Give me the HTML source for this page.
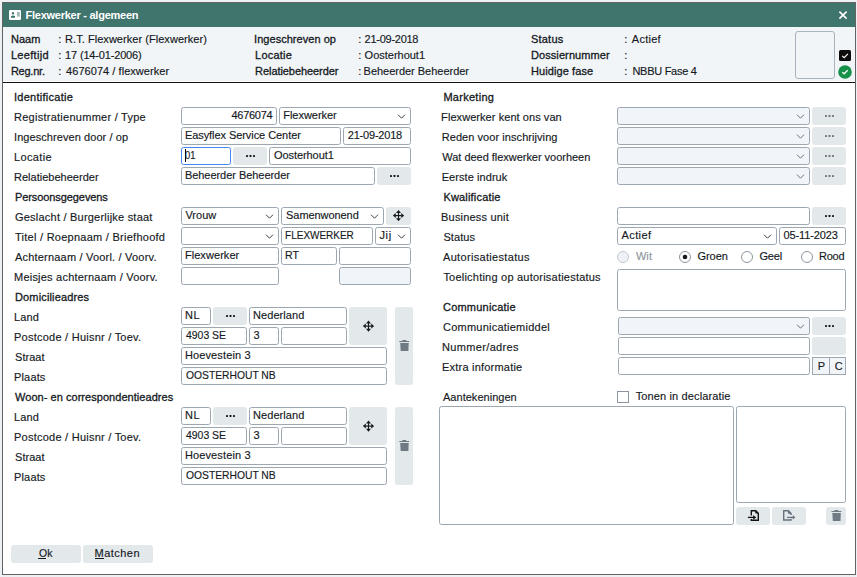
<!DOCTYPE html><html><head><meta charset="utf-8"><style>
html,body{margin:0;padding:0;}
body{width:857px;height:577px;overflow:hidden;background:#eef1f3;position:relative;font-family:"Liberation Sans",sans-serif;font-size:11px;color:#15191d;}
div,span,svg{position:absolute;box-sizing:border-box;}
.t{white-space:nowrap;line-height:14px;}
.inp{border:1px solid #9ca7b2;border-radius:2.5px;}
.btn{background:#e3e8eb;border-radius:3px;}
</style></head><body>

<div class="" style="left:2px;top:2px;width:854px;height:573px;background:#fff;border:1px solid #626262;"></div>
<div class="" style="left:3px;top:3px;width:852px;height:24px;background:#40756e;"></div>
<div class="" style="left:3px;top:27px;width:852px;height:54px;background:#f1f5f8;"></div>
<div class="" style="left:3px;top:82px;width:852px;height:1px;background:#111;"></div>
<svg style="left:9px;top:10px" width="12" height="10" viewBox="0 0 12 10"><rect x="0" y="0" width="12" height="10" rx="1.2" fill="#fff"/><ellipse cx="3.95" cy="3.25" rx="1.1" ry="1.2" fill="#40756e"/><rect x="3.4" y="4.3" width="1.2" height="1.7" fill="#9dbab5"/><rect x="2" y="5.9" width="4" height="1.85" fill="#40756e"/><rect x="8" y="2" width="2.8" height="4.6" fill="#9fbab5"/></svg>
<svg style="left:838px;top:10px" width="11" height="11" viewBox="0 0 11 11"><path d="M1.4 1.6 L8.6 8.6 M8.6 1.6 L1.4 8.6" stroke="#fff" stroke-width="1.6"/></svg>
<div class="" style="left:795px;top:31px;width:40px;height:48px;border:1px solid #a9b3bd;border-radius:3px;background:#f1f5f8;"></div>
<svg style="left:839px;top:50px" width="12" height="11" viewBox="0 0 12 11"><rect x="0" y="0" width="12" height="11" rx="1.5" fill="#0c0c0c"/><path d="M3.2 5.8 L5.2 7.7 L8.9 3.9" fill="none" stroke="#fff" stroke-width="1.15"/></svg>
<svg style="left:838px;top:65px" width="14" height="14" viewBox="0 0 14 14"><circle cx="7" cy="7" r="6.8" fill="#17914a"/><path d="M4.3 7.1 L6.1 8.8 L9.7 5.3" fill="none" stroke="#fff" stroke-width="1.25"/></svg>
<div class="inp" style="left:181px;top:107px;width:96px;height:18px;background:#fff;"></div>
<div class="inp" style="left:279px;top:107px;width:132px;height:18px;background:#fff;"><svg style="left:117px;top:5px" width="10" height="7" viewBox="0 0 10 7"><path d="M1 1.7 L4.5 5.2 L8 1.7" fill="none" stroke="#3a3f44" stroke-width="1"/></svg></div>
<div class="inp" style="left:181px;top:127px;width:160px;height:18px;background:#fff;"></div>
<div class="inp" style="left:343px;top:127px;width:68px;height:18px;background:#fff;"></div>
<div class="inp" style="left:181px;top:147px;width:50px;height:18px;background:#fff;border-color:#4189ee;"></div>
<div class="" style="left:185px;top:149px;width:1px;height:13px;background:#000;"></div>
<div class="btn" style="left:233px;top:147px;width:34px;height:18px;"><svg style="left:13px;top:8px" width="10" height="2" viewBox="0 0 10 2"><rect x="0" y="0" width="2" height="2" rx="0.4" fill="#15191d"/><rect x="3.5" y="0" width="2" height="2" rx="0.4" fill="#15191d"/><rect x="7" y="0" width="2" height="2" rx="0.4" fill="#15191d"/></svg></div>
<div class="inp" style="left:269px;top:147px;width:142px;height:18px;background:#fff;"></div>
<div class="inp" style="left:181px;top:167px;width:194px;height:18px;background:#fff;"></div>
<div class="btn" style="left:377px;top:167px;width:34px;height:18px;"><svg style="left:13px;top:8px" width="10" height="2" viewBox="0 0 10 2"><rect x="0" y="0" width="2" height="2" rx="0.4" fill="#15191d"/><rect x="3.5" y="0" width="2" height="2" rx="0.4" fill="#15191d"/><rect x="7" y="0" width="2" height="2" rx="0.4" fill="#15191d"/></svg></div>
<div class="inp" style="left:181px;top:207px;width:98px;height:18px;background:#fff;"><svg style="left:83px;top:5px" width="10" height="7" viewBox="0 0 10 7"><path d="M1 1.7 L4.5 5.2 L8 1.7" fill="none" stroke="#3a3f44" stroke-width="1"/></svg></div>
<div class="inp" style="left:281px;top:207px;width:103px;height:18px;background:#fff;"><svg style="left:88px;top:5px" width="10" height="7" viewBox="0 0 10 7"><path d="M1 1.7 L4.5 5.2 L8 1.7" fill="none" stroke="#3a3f44" stroke-width="1"/></svg></div>
<div class="btn" style="left:386px;top:207px;width:25px;height:18px;"><svg style="left:6px;top:2px" width="12" height="12" viewBox="-6.50 -6.60 12 12"><path d="M0 -5.6 L2.5 -2.7 L-2.5 -2.7 Z M0 5.6 L2.5 2.7 L-2.5 2.7 Z M-5.6 0 L-2.7 -2.5 L-2.7 2.5 Z M5.6 0 L2.7 -2.5 L2.7 2.5 Z" fill="#15191d"/><rect x="-0.55" y="-3" width="1.1" height="6" fill="#15191d"/><rect x="-3" y="-0.6" width="6" height="1.2" fill="#15191d"/></svg></div>
<div class="inp" style="left:181px;top:227px;width:98px;height:18px;background:#fff;"><svg style="left:83px;top:5px" width="10" height="7" viewBox="0 0 10 7"><path d="M1 1.7 L4.5 5.2 L8 1.7" fill="none" stroke="#3a3f44" stroke-width="1"/></svg></div>
<div class="inp" style="left:281px;top:227px;width:92px;height:18px;background:#fff;"></div>
<div class="inp" style="left:375px;top:227px;width:36px;height:18px;background:#fff;"><svg style="left:21px;top:5px" width="10" height="7" viewBox="0 0 10 7"><path d="M1 1.7 L4.5 5.2 L8 1.7" fill="none" stroke="#3a3f44" stroke-width="1"/></svg></div>
<div class="inp" style="left:181px;top:247px;width:98px;height:18px;background:#fff;"></div>
<div class="inp" style="left:281px;top:247px;width:56px;height:18px;background:#fff;"></div>
<div class="inp" style="left:339px;top:247px;width:72px;height:18px;background:#fff;"></div>
<div class="inp" style="left:181px;top:267px;width:98px;height:18px;background:#fff;"></div>
<div class="inp" style="left:339px;top:267px;width:72px;height:18px;background:#f1f4f8;"></div>
<div class="inp" style="left:181px;top:307px;width:30px;height:18px;background:#fff;"></div>
<div class="btn" style="left:213px;top:307px;width:34px;height:18px;"><svg style="left:13px;top:8px" width="10" height="2" viewBox="0 0 10 2"><rect x="0" y="0" width="2" height="2" rx="0.4" fill="#15191d"/><rect x="3.5" y="0" width="2" height="2" rx="0.4" fill="#15191d"/><rect x="7" y="0" width="2" height="2" rx="0.4" fill="#15191d"/></svg></div>
<div class="inp" style="left:249px;top:307px;width:98px;height:18px;background:#fff;"></div>
<div class="btn" style="left:349px;top:307px;width:38px;height:38px;"><svg style="left:13px;top:13px" width="12" height="12" viewBox="-6.50 -6.10 12 12"><path d="M0 -5.6 L2.5 -2.7 L-2.5 -2.7 Z M0 5.6 L2.5 2.7 L-2.5 2.7 Z M-5.6 0 L-2.7 -2.5 L-2.7 2.5 Z M5.6 0 L2.7 -2.5 L2.7 2.5 Z" fill="#15191d"/><rect x="-0.55" y="-3" width="1.1" height="6" fill="#15191d"/><rect x="-3" y="-0.6" width="6" height="1.2" fill="#15191d"/></svg></div>
<div class="inp" style="left:181px;top:327px;width:66px;height:18px;background:#fff;"></div>
<div class="inp" style="left:249px;top:327px;width:30px;height:18px;background:#fff;"></div>
<div class="inp" style="left:281px;top:327px;width:66px;height:18px;background:#fff;"></div>
<div class="inp" style="left:181px;top:347px;width:206px;height:18px;background:#fff;"></div>
<div class="inp" style="left:181px;top:367px;width:206px;height:18px;background:#fff;"></div>
<div class="btn" style="left:395px;top:307px;width:18px;height:78px;"><svg style="left:4px;top:33px" width="12" height="12" viewBox="-0.10 0.00 12 12"><rect x="3.3" y="0" width="3.8" height="1" fill="#6f7a85"/><rect x="0.2" y="1" width="9.9" height="1.05" fill="#6f7a85"/><path d="M1.1 2.9 H9.6 L9.3 11 H1.6 Z" fill="#6f7a85"/></svg></div>
<div class="inp" style="left:181px;top:407px;width:30px;height:18px;background:#fff;"></div>
<div class="btn" style="left:213px;top:407px;width:34px;height:18px;"><svg style="left:13px;top:8px" width="10" height="2" viewBox="0 0 10 2"><rect x="0" y="0" width="2" height="2" rx="0.4" fill="#15191d"/><rect x="3.5" y="0" width="2" height="2" rx="0.4" fill="#15191d"/><rect x="7" y="0" width="2" height="2" rx="0.4" fill="#15191d"/></svg></div>
<div class="inp" style="left:249px;top:407px;width:98px;height:18px;background:#fff;"></div>
<div class="btn" style="left:349px;top:407px;width:38px;height:38px;"><svg style="left:13px;top:13px" width="12" height="12" viewBox="-6.50 -6.10 12 12"><path d="M0 -5.6 L2.5 -2.7 L-2.5 -2.7 Z M0 5.6 L2.5 2.7 L-2.5 2.7 Z M-5.6 0 L-2.7 -2.5 L-2.7 2.5 Z M5.6 0 L2.7 -2.5 L2.7 2.5 Z" fill="#15191d"/><rect x="-0.55" y="-3" width="1.1" height="6" fill="#15191d"/><rect x="-3" y="-0.6" width="6" height="1.2" fill="#15191d"/></svg></div>
<div class="inp" style="left:181px;top:427px;width:66px;height:18px;background:#fff;"></div>
<div class="inp" style="left:249px;top:427px;width:30px;height:18px;background:#fff;"></div>
<div class="inp" style="left:281px;top:427px;width:66px;height:18px;background:#fff;"></div>
<div class="inp" style="left:181px;top:447px;width:206px;height:18px;background:#fff;"></div>
<div class="inp" style="left:181px;top:467px;width:206px;height:18px;background:#fff;"></div>
<div class="btn" style="left:395px;top:407px;width:18px;height:78px;"><svg style="left:4px;top:33px" width="12" height="12" viewBox="-0.10 0.00 12 12"><rect x="3.3" y="0" width="3.8" height="1" fill="#6f7a85"/><rect x="0.2" y="1" width="9.9" height="1.05" fill="#6f7a85"/><path d="M1.1 2.9 H9.6 L9.3 11 H1.6 Z" fill="#6f7a85"/></svg></div>
<div class="inp" style="left:617px;top:107px;width:193px;height:18px;background:#f1f4f8;"><svg style="left:178px;top:5px" width="10" height="7" viewBox="0 0 10 7"><path d="M1 1.7 L4.5 5.2 L8 1.7" fill="none" stroke="#6b737b" stroke-width="1"/></svg></div>
<div class="btn" style="left:812px;top:107px;width:34px;height:18px;"><svg style="left:13px;top:8px" width="10" height="2" viewBox="0 0 10 2"><rect x="0" y="0" width="2" height="2" rx="0.4" fill="#6b737b"/><rect x="3.5" y="0" width="2" height="2" rx="0.4" fill="#6b737b"/><rect x="7" y="0" width="2" height="2" rx="0.4" fill="#6b737b"/></svg></div>
<div class="inp" style="left:617px;top:127px;width:193px;height:18px;background:#f1f4f8;"><svg style="left:178px;top:5px" width="10" height="7" viewBox="0 0 10 7"><path d="M1 1.7 L4.5 5.2 L8 1.7" fill="none" stroke="#6b737b" stroke-width="1"/></svg></div>
<div class="btn" style="left:812px;top:127px;width:34px;height:18px;"><svg style="left:13px;top:8px" width="10" height="2" viewBox="0 0 10 2"><rect x="0" y="0" width="2" height="2" rx="0.4" fill="#6b737b"/><rect x="3.5" y="0" width="2" height="2" rx="0.4" fill="#6b737b"/><rect x="7" y="0" width="2" height="2" rx="0.4" fill="#6b737b"/></svg></div>
<div class="inp" style="left:617px;top:147px;width:193px;height:18px;background:#f1f4f8;"><svg style="left:178px;top:5px" width="10" height="7" viewBox="0 0 10 7"><path d="M1 1.7 L4.5 5.2 L8 1.7" fill="none" stroke="#6b737b" stroke-width="1"/></svg></div>
<div class="btn" style="left:812px;top:147px;width:34px;height:18px;"><svg style="left:13px;top:8px" width="10" height="2" viewBox="0 0 10 2"><rect x="0" y="0" width="2" height="2" rx="0.4" fill="#6b737b"/><rect x="3.5" y="0" width="2" height="2" rx="0.4" fill="#6b737b"/><rect x="7" y="0" width="2" height="2" rx="0.4" fill="#6b737b"/></svg></div>
<div class="inp" style="left:617px;top:167px;width:193px;height:18px;background:#f1f4f8;"><svg style="left:178px;top:5px" width="10" height="7" viewBox="0 0 10 7"><path d="M1 1.7 L4.5 5.2 L8 1.7" fill="none" stroke="#6b737b" stroke-width="1"/></svg></div>
<div class="btn" style="left:812px;top:167px;width:34px;height:18px;"><svg style="left:13px;top:8px" width="10" height="2" viewBox="0 0 10 2"><rect x="0" y="0" width="2" height="2" rx="0.4" fill="#6b737b"/><rect x="3.5" y="0" width="2" height="2" rx="0.4" fill="#6b737b"/><rect x="7" y="0" width="2" height="2" rx="0.4" fill="#6b737b"/></svg></div>
<div class="inp" style="left:617px;top:207px;width:193px;height:18px;background:#fff;"></div>
<div class="btn" style="left:812px;top:207px;width:34px;height:18px;"><svg style="left:13px;top:8px" width="10" height="2" viewBox="0 0 10 2"><rect x="0" y="0" width="2" height="2" rx="0.4" fill="#15191d"/><rect x="3.5" y="0" width="2" height="2" rx="0.4" fill="#15191d"/><rect x="7" y="0" width="2" height="2" rx="0.4" fill="#15191d"/></svg></div>
<div class="inp" style="left:617px;top:227px;width:160px;height:18px;background:#fff;"><svg style="left:145px;top:5px" width="10" height="7" viewBox="0 0 10 7"><path d="M1 1.7 L4.5 5.2 L8 1.7" fill="none" stroke="#3a3f44" stroke-width="1"/></svg></div>
<div class="inp" style="left:779px;top:227px;width:67px;height:18px;background:#fff;"></div>
<svg style="left:617px;top:251px" width="12" height="12" viewBox="0 0 12 12"><circle cx="6" cy="6" r="5.5" fill="#eef2f6" stroke="#c2c8ce" stroke-width="1"/></svg>
<svg style="left:679px;top:251px" width="12" height="12" viewBox="0 0 12 12"><circle cx="6" cy="6" r="5.5" fill="#fff" stroke="#8c959e" stroke-width="1"/><circle cx="6" cy="6" r="2.3" fill="#15191d"/></svg>
<svg style="left:741px;top:251px" width="12" height="12" viewBox="0 0 12 12"><circle cx="6" cy="6" r="5.5" fill="#fff" stroke="#8c959e" stroke-width="1"/></svg>
<svg style="left:801px;top:251px" width="12" height="12" viewBox="0 0 12 12"><circle cx="6" cy="6" r="5.5" fill="#fff" stroke="#8c959e" stroke-width="1"/></svg>
<div class="inp" style="left:617px;top:269px;width:229px;height:42px;background:#fff;"></div>
<div class="inp" style="left:618px;top:317px;width:192px;height:18px;background:#f1f4f8;"><svg style="left:177px;top:5px" width="10" height="7" viewBox="0 0 10 7"><path d="M1 1.7 L4.5 5.2 L8 1.7" fill="none" stroke="#6b737b" stroke-width="1"/></svg></div>
<div class="btn" style="left:812px;top:317px;width:34px;height:18px;"><svg style="left:13px;top:8px" width="10" height="2" viewBox="0 0 10 2"><rect x="0" y="0" width="2" height="2" rx="0.4" fill="#15191d"/><rect x="3.5" y="0" width="2" height="2" rx="0.4" fill="#15191d"/><rect x="7" y="0" width="2" height="2" rx="0.4" fill="#15191d"/></svg></div>
<div class="inp" style="left:618px;top:337px;width:192px;height:18px;background:#fff;"></div>
<div class="btn" style="left:812px;top:337px;width:34px;height:18px;"></div>
<div class="inp" style="left:618px;top:357px;width:192px;height:18px;background:#fff;"></div>
<div style="left:812px;top:357px;width:18px;height:18px;border:1px solid #9ca7b2;background:#f1f5f8;"></div>
<div style="left:829px;top:357px;width:17px;height:18px;border:1px solid #9ca7b2;background:#f1f5f8;"></div>
<div style="left:617px;top:391px;width:12px;height:12px;border:1px solid #8c959e;background:#fff;"></div>
<div class="inp" style="left:439px;top:406px;width:295px;height:119px;background:#fff;"></div>
<div class="inp" style="left:736px;top:406px;width:110px;height:97px;background:#fff;"></div>
<div class="btn" style="left:736px;top:507px;width:34px;height:18px;"><svg style="left:0;top:0" width="34" height="18" viewBox="0 0 34 18"><path d="M15.3 8.4 V3.7 H19.8 L22.3 6.2 V13.2 H15.3 V12.1" fill="none" stroke="#111" stroke-width="1.4"/><path d="M19.4 3.3 L22.7 6.6 L19.4 6.6 Z" fill="#111"/><path d="M11.9 10.4 H18" stroke="#111" stroke-width="1.3"/><path d="M17.2 8 L20.2 10.4 L17.2 12.8 Z" fill="#111"/></svg></div>
<div class="btn" style="left:772px;top:507px;width:34px;height:18px;"><svg style="left:0;top:0" width="34" height="18" viewBox="0 0 34 18"><path d="M19 7.9 V6.3 L16.4 3.8 H11.7 V13 H19 V11.8" fill="none" stroke="#67727d" stroke-width="1.4"/><path d="M16 3.4 L19.4 6.8 L16 6.8 Z" fill="#67727d"/><path d="M15.1 10.4 H21.5" stroke="#67727d" stroke-width="1.3"/><path d="M20.8 8 L23.3 10.4 L20.8 12.6 Z" fill="#67727d"/></svg></div>
<div class="btn" style="left:826px;top:507px;width:20px;height:18px;"><svg style="left:5px;top:3px" width="12" height="12" viewBox="-0.20 0.00 12 12"><rect x="3.3" y="0" width="3.8" height="1" fill="#6f7a85"/><rect x="0.2" y="1" width="9.9" height="1.05" fill="#6f7a85"/><path d="M1.1 2.9 H9.6 L9.3 11 H1.6 Z" fill="#6f7a85"/></svg></div>
<div class="btn" style="left:11px;top:545px;width:70px;height:18px;"></div>
<div class="btn" style="left:83px;top:545px;width:70px;height:18px;"></div>
<div class="" style="left:38px;top:558px;width:8px;height:1px;background:#15191d;"></div>
<div class="" style="left:95px;top:558px;width:9px;height:1px;background:#15191d;"></div>
<div class="t" style="left:25.50px;top:8px;letter-spacing:-0.250px;font-weight:bold;color:#fff;">Flexwerker - algemeen</div>
<div class="t" style="left:10.90px;top:32px;letter-spacing:0.067px;-webkit-text-stroke:0.3px #15191d;color:#15191d;">Naam</div>
<div class="t" style="left:58.20px;top:32px;letter-spacing:0.000px;-webkit-text-stroke:0.15px #15191d;color:#15191d;">:</div>
<div class="t" style="left:65.10px;top:32px;letter-spacing:0.044px;-webkit-text-stroke:0.15px #15191d;color:#15191d;">R.T. Flexwerker (Flexwerker)</div>
<div class="t" style="left:10.90px;top:48px;letter-spacing:0.329px;-webkit-text-stroke:0.3px #15191d;color:#15191d;">Leeftijd</div>
<div class="t" style="left:58.20px;top:48px;letter-spacing:0.000px;-webkit-text-stroke:0.15px #15191d;color:#15191d;">:</div>
<div class="t" style="left:65.10px;top:48px;letter-spacing:-0.164px;-webkit-text-stroke:0.15px #15191d;color:#15191d;">17 (14-01-2006)</div>
<div class="t" style="left:10.90px;top:64px;letter-spacing:-0.233px;-webkit-text-stroke:0.3px #15191d;color:#15191d;">Reg.nr.</div>
<div class="t" style="left:58.20px;top:64px;letter-spacing:0.000px;-webkit-text-stroke:0.15px #15191d;color:#15191d;">:</div>
<div class="t" style="left:66.10px;top:64px;letter-spacing:0.047px;-webkit-text-stroke:0.15px #15191d;color:#15191d;">4676074 / flexwerker</div>
<div class="t" style="left:254.10px;top:32px;letter-spacing:0.036px;-webkit-text-stroke:0.3px #15191d;color:#15191d;">Ingeschreven op</div>
<div class="t" style="left:358.20px;top:32px;letter-spacing:0.000px;-webkit-text-stroke:0.15px #15191d;color:#15191d;">:</div>
<div class="t" style="left:364.60px;top:32px;letter-spacing:-0.267px;-webkit-text-stroke:0.15px #15191d;color:#15191d;">21-09-2018</div>
<div class="t" style="left:255.10px;top:48px;letter-spacing:0.200px;-webkit-text-stroke:0.3px #15191d;color:#15191d;">Locatie</div>
<div class="t" style="left:358.20px;top:48px;letter-spacing:0.000px;-webkit-text-stroke:0.15px #15191d;color:#15191d;">:</div>
<div class="t" style="left:364.60px;top:48px;letter-spacing:-0.010px;-webkit-text-stroke:0.15px #15191d;color:#15191d;">Oosterhout1</div>
<div class="t" style="left:255.10px;top:64px;letter-spacing:-0.067px;-webkit-text-stroke:0.3px #15191d;color:#15191d;">Relatiebeheerder</div>
<div class="t" style="left:358.20px;top:64px;letter-spacing:0.000px;-webkit-text-stroke:0.15px #15191d;color:#15191d;">:</div>
<div class="t" style="left:363.60px;top:64px;letter-spacing:-0.022px;-webkit-text-stroke:0.15px #15191d;color:#15191d;">Beheerder Beheerder</div>
<div class="t" style="left:530.90px;top:32px;letter-spacing:0.240px;-webkit-text-stroke:0.3px #15191d;color:#15191d;">Status</div>
<div class="t" style="left:624.20px;top:32px;letter-spacing:0.000px;-webkit-text-stroke:0.15px #15191d;color:#15191d;">:</div>
<div class="t" style="left:631.80px;top:32px;letter-spacing:0.260px;-webkit-text-stroke:0.15px #15191d;color:#15191d;">Actief</div>
<div class="t" style="left:530.90px;top:48px;letter-spacing:0.100px;-webkit-text-stroke:0.3px #15191d;color:#15191d;">Dossiernummer</div>
<div class="t" style="left:624.20px;top:48px;letter-spacing:0.000px;-webkit-text-stroke:0.15px #15191d;color:#15191d;">:</div>
<div class="t" style="left:530.90px;top:64px;letter-spacing:0.100px;-webkit-text-stroke:0.3px #15191d;color:#15191d;">Huidige fase</div>
<div class="t" style="left:624.20px;top:64px;letter-spacing:0.000px;-webkit-text-stroke:0.15px #15191d;color:#15191d;">:</div>
<div class="t" style="left:632.40px;top:64px;letter-spacing:-0.270px;-webkit-text-stroke:0.15px #15191d;color:#15191d;">NBBU Fase 4</div>
<div class="t" style="left:14.00px;top:90px;letter-spacing:0.267px;-webkit-text-stroke:0.3px #15191d;color:#15191d;">Identificatie</div>
<div class="t" style="left:14.00px;top:110px;letter-spacing:0.261px;-webkit-text-stroke:0.15px #15191d;color:#15191d;">Registratienummer / Type</div>
<div class="t" style="left:231.40px;top:108px;letter-spacing:-0.250px;-webkit-text-stroke:0.15px #15191d;color:#15191d;">4676074</div>
<div class="t" style="left:283.20px;top:108px;letter-spacing:-0.022px;-webkit-text-stroke:0.15px #15191d;color:#15191d;">Flexwerker</div>
<div class="t" style="left:14.00px;top:130px;letter-spacing:0.071px;-webkit-text-stroke:0.15px #15191d;color:#15191d;">Ingeschreven door / op</div>
<div class="t" style="left:184.90px;top:128px;letter-spacing:-0.064px;-webkit-text-stroke:0.15px #15191d;color:#15191d;">Easyflex Service Center</div>
<div class="t" style="left:347.80px;top:128px;letter-spacing:-0.211px;-webkit-text-stroke:0.15px #15191d;color:#15191d;">21-09-2018</div>
<div class="t" style="left:14.00px;top:150px;letter-spacing:0.367px;-webkit-text-stroke:0.15px #15191d;color:#15191d;">Locatie</div>
<div class="t" style="left:185.10px;top:148px;letter-spacing:0.000px;-webkit-text-stroke:0.15px #15191d;color:#15191d;transform:scaleX(0.85);transform-origin:0 0;">01</div>
<div class="t" style="left:273.90px;top:148px;letter-spacing:-0.060px;-webkit-text-stroke:0.15px #15191d;color:#15191d;">Oosterhout1</div>
<div class="t" style="left:14.00px;top:170px;letter-spacing:0.013px;-webkit-text-stroke:0.15px #15191d;color:#15191d;">Relatiebeheerder</div>
<div class="t" style="left:184.90px;top:168px;letter-spacing:-0.044px;-webkit-text-stroke:0.15px #15191d;color:#15191d;">Beheerder Beheerder</div>
<div class="t" style="left:15.00px;top:190px;letter-spacing:-0.087px;-webkit-text-stroke:0.3px #15191d;color:#15191d;">Persoonsgegevens</div>
<div class="t" style="left:15.00px;top:210px;letter-spacing:0.219px;-webkit-text-stroke:0.15px #15191d;color:#15191d;">Geslacht / Burgerlijke staat</div>
<div class="t" style="left:185.40px;top:208px;letter-spacing:0.025px;-webkit-text-stroke:0.15px #15191d;color:#15191d;">Vrouw</div>
<div class="t" style="left:286.10px;top:208px;letter-spacing:-0.070px;-webkit-text-stroke:0.15px #15191d;color:#15191d;">Samenwonend</div>
<div class="t" style="left:15.00px;top:230px;letter-spacing:0.261px;-webkit-text-stroke:0.15px #15191d;color:#15191d;">Titel / Roepnaam / Briefhoofd</div>
<div class="t" style="left:285.10px;top:228px;letter-spacing:0.000px;-webkit-text-stroke:0.15px #15191d;color:#15191d;transform:scaleX(0.9068);transform-origin:1px 0;">FLEXWERKER</div>
<div class="t" style="left:379.50px;top:228px;letter-spacing:0.600px;-webkit-text-stroke:0.15px #15191d;color:#15191d;">Jij</div>
<div class="t" style="left:15.00px;top:250px;letter-spacing:0.196px;-webkit-text-stroke:0.15px #15191d;color:#15191d;">Achternaam / Voorl. / Voorv.</div>
<div class="t" style="left:184.90px;top:248px;letter-spacing:0.067px;-webkit-text-stroke:0.15px #15191d;color:#15191d;">Flexwerker</div>
<div class="t" style="left:285.10px;top:248px;letter-spacing:0.000px;-webkit-text-stroke:0.15px #15191d;color:#15191d;transform:scaleX(0.9643);transform-origin:1px 0;">RT</div>
<div class="t" style="left:14.00px;top:270px;letter-spacing:0.219px;-webkit-text-stroke:0.15px #15191d;color:#15191d;">Meisjes achternaam / Voorv.</div>
<div class="t" style="left:15.00px;top:290px;letter-spacing:0.146px;-webkit-text-stroke:0.3px #15191d;color:#15191d;">Domicilieadres</div>
<div class="t" style="left:14.00px;top:310px;letter-spacing:0.100px;-webkit-text-stroke:0.15px #15191d;color:#15191d;">Land</div>
<div class="t" style="left:184.90px;top:308px;letter-spacing:0.600px;-webkit-text-stroke:0.15px #15191d;color:#15191d;">NL</div>
<div class="t" style="left:253.10px;top:308px;letter-spacing:0.050px;-webkit-text-stroke:0.15px #15191d;color:#15191d;">Nederland</div>
<div class="t" style="left:14.00px;top:330px;letter-spacing:0.242px;-webkit-text-stroke:0.15px #15191d;color:#15191d;">Postcode / Huisnr / Toev.</div>
<div class="t" style="left:185.90px;top:328px;letter-spacing:0.000px;-webkit-text-stroke:0.15px #15191d;color:#15191d;transform:scaleX(0.9476);transform-origin:0px 0;">4903 SE</div>
<div class="t" style="left:253.60px;top:328px;letter-spacing:0.000px;-webkit-text-stroke:0.15px #15191d;color:#15191d;">3</div>
<div class="t" style="left:15.00px;top:350px;letter-spacing:0.040px;-webkit-text-stroke:0.15px #15191d;color:#15191d;">Straat</div>
<div class="t" style="left:184.90px;top:348px;letter-spacing:0.127px;-webkit-text-stroke:0.15px #15191d;color:#15191d;">Hoevestein 3</div>
<div class="t" style="left:14.00px;top:370px;letter-spacing:0.160px;-webkit-text-stroke:0.15px #15191d;color:#15191d;">Plaats</div>
<div class="t" style="left:185.90px;top:368px;letter-spacing:0.000px;-webkit-text-stroke:0.15px #15191d;color:#15191d;transform:scaleX(0.9365);transform-origin:0px 0;">OOSTERHOUT NB</div>
<div class="t" style="left:15.00px;top:390px;letter-spacing:0.043px;-webkit-text-stroke:0.3px #15191d;color:#15191d;">Woon- en correspondentieadres</div>
<div class="t" style="left:14.00px;top:410px;letter-spacing:0.100px;-webkit-text-stroke:0.15px #15191d;color:#15191d;">Land</div>
<div class="t" style="left:184.90px;top:408px;letter-spacing:0.600px;-webkit-text-stroke:0.15px #15191d;color:#15191d;">NL</div>
<div class="t" style="left:253.10px;top:408px;letter-spacing:0.050px;-webkit-text-stroke:0.15px #15191d;color:#15191d;">Nederland</div>
<div class="t" style="left:14.00px;top:430px;letter-spacing:0.242px;-webkit-text-stroke:0.15px #15191d;color:#15191d;">Postcode / Huisnr / Toev.</div>
<div class="t" style="left:185.90px;top:428px;letter-spacing:0.000px;-webkit-text-stroke:0.15px #15191d;color:#15191d;transform:scaleX(0.9476);transform-origin:0px 0;">4903 SE</div>
<div class="t" style="left:253.60px;top:428px;letter-spacing:0.000px;-webkit-text-stroke:0.15px #15191d;color:#15191d;">3</div>
<div class="t" style="left:15.00px;top:450px;letter-spacing:0.040px;-webkit-text-stroke:0.15px #15191d;color:#15191d;">Straat</div>
<div class="t" style="left:184.90px;top:448px;letter-spacing:0.127px;-webkit-text-stroke:0.15px #15191d;color:#15191d;">Hoevestein 3</div>
<div class="t" style="left:14.00px;top:470px;letter-spacing:0.160px;-webkit-text-stroke:0.15px #15191d;color:#15191d;">Plaats</div>
<div class="t" style="left:185.90px;top:468px;letter-spacing:0.000px;-webkit-text-stroke:0.15px #15191d;color:#15191d;transform:scaleX(0.9365);transform-origin:0px 0;">OOSTERHOUT NB</div>
<div class="t" style="left:443.40px;top:90px;letter-spacing:0.275px;-webkit-text-stroke:0.3px #15191d;color:#15191d;">Marketing</div>
<div class="t" style="left:441.10px;top:110px;letter-spacing:0.064px;-webkit-text-stroke:0.15px #15191d;color:#15191d;">Flexwerker kent ons van</div>
<div class="t" style="left:441.70px;top:130px;letter-spacing:0.064px;-webkit-text-stroke:0.15px #15191d;color:#15191d;">Reden voor inschrijving</div>
<div class="t" style="left:442.30px;top:150px;letter-spacing:-0.030px;-webkit-text-stroke:0.15px #15191d;color:#15191d;">Wat deed flexwerker voorheen</div>
<div class="t" style="left:441.70px;top:170px;letter-spacing:0.067px;-webkit-text-stroke:0.15px #15191d;color:#15191d;">Eerste indruk</div>
<div class="t" style="left:443.40px;top:190px;letter-spacing:0.182px;-webkit-text-stroke:0.3px #15191d;color:#15191d;">Kwalificatie</div>
<div class="t" style="left:441.10px;top:210px;letter-spacing:0.183px;-webkit-text-stroke:0.15px #15191d;color:#15191d;">Business unit</div>
<div class="t" style="left:443.40px;top:230px;letter-spacing:0.080px;-webkit-text-stroke:0.15px #15191d;color:#15191d;">Status</div>
<div class="t" style="left:621.50px;top:228px;letter-spacing:0.400px;-webkit-text-stroke:0.15px #15191d;color:#15191d;">Actief</div>
<div class="t" style="left:783.40px;top:228px;letter-spacing:-0.111px;-webkit-text-stroke:0.15px #15191d;color:#15191d;">05-11-2023</div>
<div class="t" style="left:443.00px;top:250px;letter-spacing:0.325px;-webkit-text-stroke:0.15px #15191d;color:#15191d;">Autorisatiestatus</div>
<div class="t" style="left:635.90px;top:249px;letter-spacing:0.100px;-webkit-text-stroke:0.15px #8e969e;color:#8e969e;">Wit</div>
<div class="t" style="left:697.40px;top:249px;letter-spacing:-0.025px;-webkit-text-stroke:0.15px #15191d;color:#15191d;">Groen</div>
<div class="t" style="left:759.40px;top:249px;letter-spacing:-0.167px;-webkit-text-stroke:0.15px #15191d;color:#15191d;">Geel</div>
<div class="t" style="left:819.00px;top:249px;letter-spacing:-0.233px;-webkit-text-stroke:0.15px #15191d;color:#15191d;">Rood</div>
<div class="t" style="left:443.40px;top:270px;letter-spacing:0.219px;-webkit-text-stroke:0.15px #15191d;color:#15191d;">Toelichting op autorisatiestatus</div>
<div class="t" style="left:443.00px;top:300px;letter-spacing:0.209px;-webkit-text-stroke:0.3px #15191d;color:#15191d;">Communicatie</div>
<div class="t" style="left:443.00px;top:320px;letter-spacing:0.235px;-webkit-text-stroke:0.15px #15191d;color:#15191d;">Communicatiemiddel</div>
<div class="t" style="left:442.00px;top:340px;letter-spacing:0.345px;-webkit-text-stroke:0.15px #15191d;color:#15191d;">Nummer/adres</div>
<div class="t" style="left:442.00px;top:360px;letter-spacing:0.213px;-webkit-text-stroke:0.15px #15191d;color:#15191d;">Extra informatie</div>
<div class="t" style="left:817.80px;top:359px;letter-spacing:0.000px;-webkit-text-stroke:0.15px #15191d;color:#15191d;">P</div>
<div class="t" style="left:834.80px;top:359px;letter-spacing:0.000px;-webkit-text-stroke:0.15px #15191d;color:#15191d;">C</div>
<div class="t" style="left:443.00px;top:390px;letter-spacing:0.025px;-webkit-text-stroke:0.15px #15191d;color:#15191d;">Aantekeningen</div>
<div class="t" style="left:635.70px;top:389px;letter-spacing:0.133px;-webkit-text-stroke:0.15px #15191d;color:#15191d;">Tonen in declaratie</div>
<div class="t" style="left:38.50px;top:546px;letter-spacing:0.000px;-webkit-text-stroke:0.15px #15191d;color:#15191d;transform:scaleX(0.9500);transform-origin:0px 0;">Ok</div>
<div class="t" style="left:94.50px;top:546px;letter-spacing:0.483px;-webkit-text-stroke:0.15px #15191d;color:#15191d;">Matchen</div>
</body></html>
